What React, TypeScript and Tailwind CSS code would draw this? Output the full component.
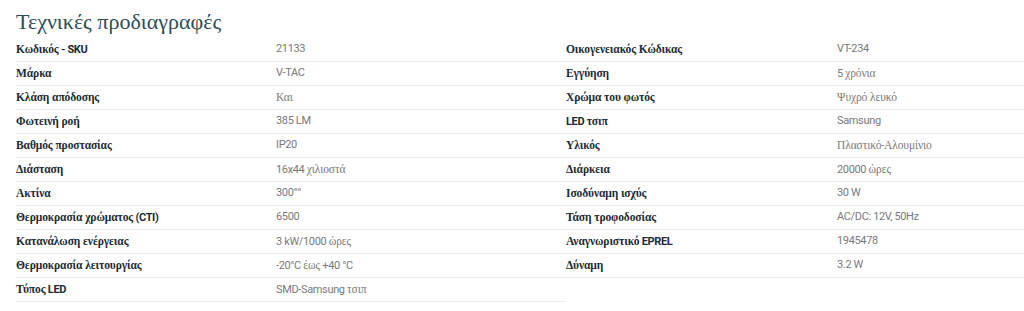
import { Fragment } from "react";

type Spec = { label: string; value: string };

const left: Spec[] = [
  { label: "Κωδικός - SKU", value: "21133" },
  { label: "Μάρκα", value: "V-TAC" },
  { label: "Κλάση απόδοσης", value: "Και" },
  { label: "Φωτεινή ροή", value: "385 LM" },
  { label: "Βαθμός προστασίας", value: "IP20" },
  { label: "Διάσταση", value: "16x44 χιλιοστά" },
  { label: "Ακτίνα", value: "300°°" },
  { label: "Θερμοκρασία χρώματος (CTI)", value: "6500" },
  { label: "Κατανάλωση ενέργειας", value: "3 kW/1000 ώρες" },
  { label: "Θερμοκρασία λειτουργίας", value: "-20°C έως +40 °C" },
  { label: "Τύπος LED", value: "SMD-Samsung τσιπ" },
];

const right: Spec[] = [
  { label: "Οικογενειακός Κώδικας", value: "VT-234" },
  { label: "Εγγύηση", value: "5 χρόνια" },
  { label: "Χρώμα του φωτός", value: "Ψυχρό λευκό" },
  { label: "LED τσιπ", value: "Samsung" },
  { label: "Υλικός", value: "Πλαστικό-Αλουμίνιο" },
  { label: "Διάρκεια", value: "20000 ώρες" },
  { label: "Ισοδύναμη ισχύς", value: "30 W" },
  { label: "Τάση τροφοδοσίας", value: "AC/DC: 12V, 50Hz" },
  { label: "Αναγνωριστικό EPREL", value: "1945478" },
  { label: "Δύναμη", value: "3.2 W" },
];

// greek runs are set in a serif, everything else in the sans
const greek = /([\u0370-\u03FF\u1F00-\u1FFF]+(?:\s+[\u0370-\u03FF\u1F00-\u1FFF]+)*)/;

const Mixed = ({ text }: { text: string }) => (
  <>
    {text.split(greek).map((part, i) =>
      i % 2 === 1 ? (
        <span key={i} className="font-['Liberation_Serif',serif] text-[11.5px] tracking-[-0.1px]">
          {part}
        </span>
      ) : (
        <Fragment key={i}>{part}</Fragment>
      )
    )}
  </>
);

const Column = ({ rows, labelWidth, className }: { rows: Spec[]; labelWidth: string; className: string }) => (
  <div className={className}>
    {rows.map((r) => (
      <div key={r.label} className="flex h-6 items-center border-b border-[#ededed]">
        <div className={`${labelWidth} shrink-0 font-bold text-[#1d2b33]`}>
          <Mixed text={r.label} />
        </div>
        <div className="text-[#7a7a7a]">
          <Mixed text={r.value} />
        </div>
      </div>
    ))}
  </div>
);

export default function App() {
  return (
    <div className="h-[311px] w-[1024px] overflow-hidden bg-white pl-4 font-['Roboto',sans-serif] text-[11px] tracking-[-0.35px]">
      <h2 className="h-[38px] pt-[8px] font-['Liberation_Serif',serif] text-[22px] leading-[28px] tracking-normal text-[#2d4e58]">
        Τεχνικές προδιαγραφές
      </h2>
      <div className="flex">
        <Column rows={left} labelWidth="w-[260px]" className="w-[550px] shrink-0" />
        <Column rows={right} labelWidth="w-[271px]" className="flex-1" />
      </div>
    </div>
  );
}
